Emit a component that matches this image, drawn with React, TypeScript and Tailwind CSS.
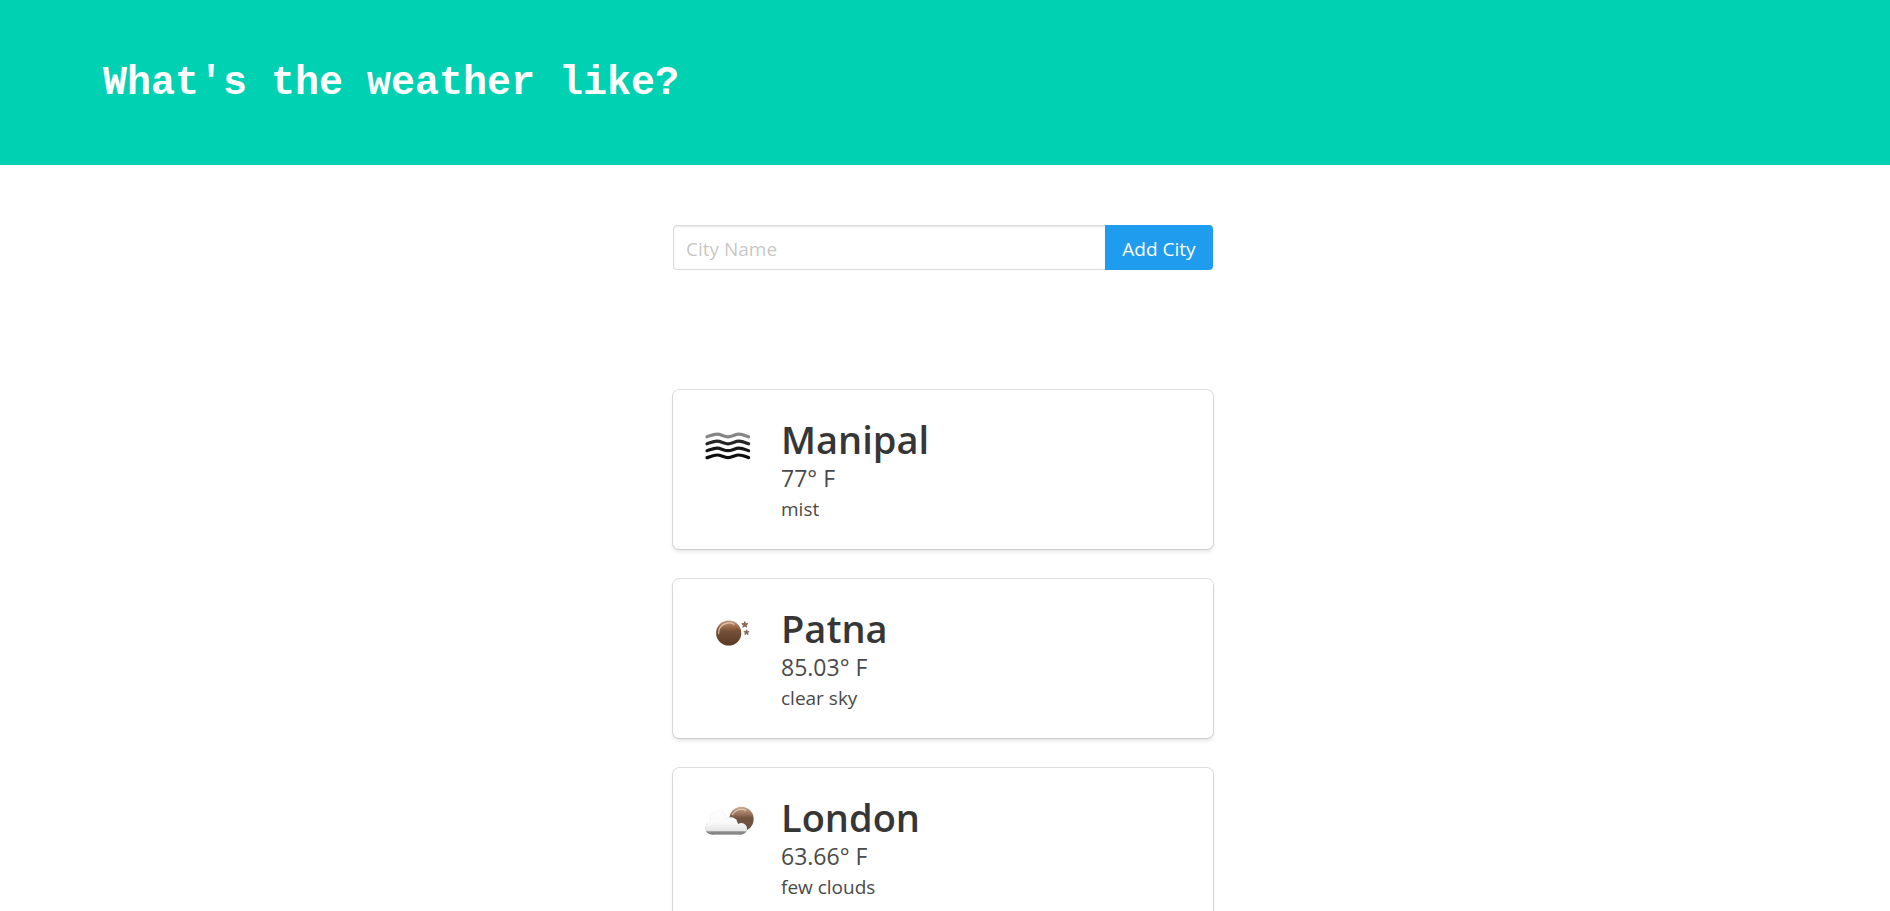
import { useState } from "react";
import type { FormEvent, ReactNode } from "react";

type Weather = "mist" | "clear" | "clouds";

interface City {
  name: string;
  temperature: string;
  description: string;
  weather: Weather;
}

const CITIES: City[] = [
  { name: "Manipal", temperature: "77", description: "mist", weather: "mist" },
  { name: "Patna", temperature: "85.03", description: "clear sky", weather: "clear" },
  { name: "London", temperature: "63.66", description: "few clouds", weather: "clouds" },
];

function MistIcon() {
  const rows = [
    { y: 20.6, color: "#858585" },
    { y: 27.6, color: "#262626" },
    { y: 34.5, color: "#161616" },
    { y: 41.4, color: "#0c0c0c" },
  ];
  return (
    <>
      {rows.map(({ y, color }) => (
        <path
          key={y}
          d={`M9 ${y + 1.2}C12 ${y + 0.4} 15 ${y - 1.4} 19 ${y - 1.4}S26 ${y + 1.2} 30 ${y + 1.2}S37 ${y - 1.4} 41 ${y - 1.4}S48 ${y + 0.4} 50.6 ${y + 1.2}`}
          fill="none"
          stroke={color}
          strokeWidth="3.2"
          strokeLinecap="round"
        />
      ))}
    </>
  );
}

function ClearIcon() {
  return (
    <>
      <defs>
        <linearGradient id="moon" x1="0" y1="0" x2="0" y2="1">
          <stop offset="0" stopColor="#c79a7c" />
          <stop offset="0.32" stopColor="#8f6040" />
          <stop offset="0.42" stopColor="#755039" />
          <stop offset="1" stopColor="#593a24" />
        </linearGradient>
      </defs>
      <circle cx="30.7" cy="29" r="12.6" fill="url(#moon)" />
      <path d="M20.6 29.5A10.4 10.4 0 0 1 36 20.2" fill="none" stroke="#ecd2c0" strokeWidth="1.3" strokeLinecap="round" opacity="0.8" />
      <path d="M46.8 17.6l.9 1.9 2.1.2-1.6 1.4.6 2.1-2-1.1-2 1.1.6-2.1-1.6-1.400 2.100-.2z" fill="#8a6a58" stroke="#8a6a58" strokeWidth="1" strokeLinejoin="round" />
      <path d="M48.5 25.800l.7 1.600 1.700.2-1.200 1.200.4 1.700-1.600-.9-1.600.9.400-1.700-1.200-1.200 1.700-.2z" fill="#8a6a58" stroke="#8a6a58" strokeWidth="1" strokeLinejoin="round" />
    </>
  );
}

function CloudsIcon() {
  return (
    <>
      <defs>
        <linearGradient id="cloudMoon" x1="0" y1="0" x2="0" y2="1">
          <stop offset="0" stopColor="#cdab95" />
          <stop offset="0.35" stopColor="#8f6850" />
          <stop offset="0.45" stopColor="#73543f" />
          <stop offset="1" stopColor="#67503f" />
        </linearGradient>
        <linearGradient id="cloud" x1="0" y1="17.5" x2="0" y2="41.5" gradientUnits="userSpaceOnUse">
          <stop offset="0" stopColor="#fefefe" />
          <stop offset="0.5" stopColor="#fafafa" />
          <stop offset="0.84" stopColor="#e4e4e4" />
          <stop offset="0.89" stopColor="#8c8c8c" />
          <stop offset="1" stopColor="#808080" />
        </linearGradient>
        <filter id="cloudEdge" x="-10%" y="-10%" width="120%" height="120%">
          <feDropShadow dx="0" dy="0" stdDeviation="0.6" floodColor="#777777" floodOpacity="0.5" />
        </filter>
      </defs>
      <circle cx="43.5" cy="26" r="12.2" fill="url(#cloudMoon)" />
      <path d="M34.5 21.5A10 10 0 0 1 47.5 17.2" fill="none" stroke="#f0dccd" strokeWidth="1.2" strokeLinecap="round" opacity="0.8" />
      <g fill="url(#cloud)" filter="url(#cloudEdge)">
        <circle cx="20.5" cy="25.8" r="8" />
        <circle cx="13.8" cy="34.9" r="6.6" />
        <circle cx="33" cy="31" r="6.8" />
        <circle cx="43.3" cy="35.8" r="5.7" />
        <path d="M13.8 28.3L33 26L43.3 33V41.5H13.8Z" />
      </g>
    </>
  );
}

const ICONS: Record<Weather, ReactNode> = {
  mist: <MistIcon />,
  clear: <ClearIcon />,
  clouds: <CloudsIcon />,
};

function CityCard({ city }: { city: City }) {
  return (
    <article className="flex items-start gap-[21px] rounded-md bg-white p-[25px] shadow-[0_3px_4px_rgba(10,10,10,0.1),0_0_0_1px_rgba(10,10,10,0.12)]">
      <svg viewBox="0 0 62 62" role="img" aria-label={city.description} className="size-[62px] shrink-0">
        {ICONS[city.weather]}
      </svg>
      <div className="min-w-0 flex-1 text-[#4a4a4a]">
        <h2 className="text-[38px] leading-[48px] font-semibold text-[#363636]">{city.name}</h2>
        <p className="text-[23px] leading-[31px]">{city.temperature}° F</p>
        <p className="text-[19px] leading-[30px]">{city.description}</p>
      </div>
    </article>
  );
}

export default function App() {
  const [name, setName] = useState("");
  const submit = (event: FormEvent) => {
    event.preventDefault();
    setName("");
  };

  return (
    <div className="h-screen overflow-hidden bg-white font-['Open_Sans','Noto_Sans',sans-serif]">
      <header className="bg-[#00d1b2] px-[103px] pt-[61px] pb-[59px]">
        <h1 className="font-['Liberation_Mono','Courier_New',monospace] text-[40px] leading-[45px] font-bold text-white">
          What's the weather like?
        </h1>
      </header>
      <main className="pt-[60px] pr-1">
        <div className="mx-auto w-full max-w-[540px]">
          <form onSubmit={submit} className="mb-[120px] flex h-[45px]">
            <input
              type="text"
              aria-label="City Name"
              placeholder="City Name"
              value={name}
              onChange={(event) => setName(event.target.value)}
              className="min-w-0 flex-1 rounded-l-sm border border-r-0 border-[#dbdbdb] px-3 pt-[3px] text-[19px] text-[#363636] shadow-[inset_0_1px_2px_rgba(10,10,10,0.1)] outline-none placeholder:text-[#363636]/30"
            />
            <button type="submit" className="w-[108px] shrink-0 rounded-r-sm bg-[#209cee] pt-[3px] text-[19px] text-white">
              Add City
            </button>
          </form>
          <section aria-label="Cities" className="flex flex-col gap-[30px]">
            {CITIES.map((city) => (
              <CityCard key={city.name} city={city} />
            ))}
          </section>
        </div>
      </main>
    </div>
  );
}
